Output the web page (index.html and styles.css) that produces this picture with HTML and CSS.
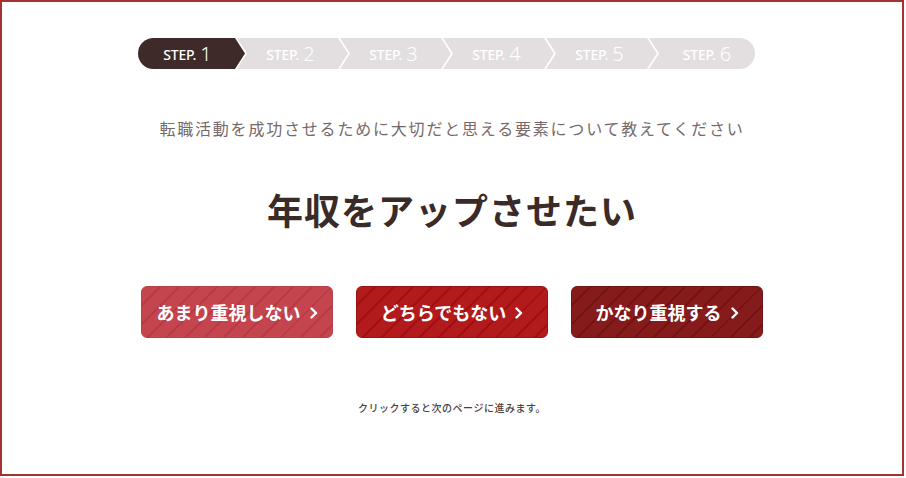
FILE: index.html
```html
<!DOCTYPE html>
<html lang="ja">
<head>
<meta charset="utf-8">
<title>STEP 1</title>
<link rel="stylesheet" href="styles.css">
</head>
<body>
<div class="frame">
  <ol class="steps">
    <li class="step step-first is-current"><span class="step-label">STEP.</span><span class="step-num">1</span></li>
    <li class="step"><span class="step-label">STEP.</span><span class="step-num">2</span></li>
    <li class="step"><span class="step-label">STEP.</span><span class="step-num">3</span></li>
    <li class="step"><span class="step-label">STEP.</span><span class="step-num">4</span></li>
    <li class="step"><span class="step-label">STEP.</span><span class="step-num">5</span></li>
    <li class="step step-last"><span class="step-label">STEP.</span><span class="step-num">6</span></li>
  </ol>

  <p class="lead">転職活動を成功させるために大切だと思える要素について教えてください</p>

  <h1 class="question">年収をアップさせたい</h1>

  <div class="choices">
    <button class="choice choice-low" type="button">あまり重視しない<svg class="chev" viewBox="0 0 8 12" width="8" height="12"><polyline points="1.5,1.5 6,6 1.5,10.5" fill="none" stroke="#fff" stroke-width="2.4" stroke-linecap="round" stroke-linejoin="round"/></svg></button>
    <button class="choice choice-mid" type="button">どちらでもない<svg class="chev" viewBox="0 0 8 12" width="8" height="12"><polyline points="1.5,1.5 6,6 1.5,10.5" fill="none" stroke="#fff" stroke-width="2.4" stroke-linecap="round" stroke-linejoin="round"/></svg></button>
    <button class="choice choice-high" type="button">かなり重視する<svg class="chev" viewBox="0 0 8 12" width="8" height="12"><polyline points="1.5,1.5 6,6 1.5,10.5" fill="none" stroke="#fff" stroke-width="2.4" stroke-linecap="round" stroke-linejoin="round"/></svg></button>
  </div>

  <p class="note">クリックすると次のページに進みます。</p>
</div>
</body>
</html>
```

FILE: styles.css
```css
* { box-sizing: border-box; }

html, body {
  margin: 0;
  padding: 0;
  background: #ffffff;
}

body {
  font-family: "Noto Sans CJK JP", "Noto Sans", sans-serif;
}

.frame {
  width: 904px;
  height: 476px;
  border: 2px solid #a5322e;
  display: flex;
  flex-direction: column;
  align-items: center;
}

/* step bar */
.steps {
  list-style: none;
  margin: 36px 0 0 136px;
  padding: 0;
  display: flex;
  align-self: flex-start;
  height: 31px;
}

.step {
  width: 111px;
  height: 31px;
  margin-left: -8px;
  padding: 0 14px 0 10px;
  background: #e3dedf;
  color: #ffffff;
  display: flex;
  align-items: center;
  justify-content: center;
  clip-path: polygon(0 0, calc(100% - 10px) 0, 100% 50%, calc(100% - 10px) 100%, 0 100%, 10px 50%);
}

.step-first {
  width: 107px;
  margin-left: 0;
  padding: 0 8px 0 0;
  border-radius: 16px 0 0 16px;
  clip-path: polygon(0 0, calc(100% - 10px) 0, 100% 50%, calc(100% - 10px) 100%, 0 100%);
}

.step-last {
  width: 106px;
  padding: 0 0 0 10px;
  border-radius: 0 16px 16px 0;
  clip-path: polygon(0 0, 100% 0, 100% 100%, 0 100%, 10px 50%);
}

.is-current {
  background: #3e2a28;
}

.step-label {
  font-family: "Noto Sans", sans-serif;
  font-size: 14px;
  font-weight: 500;
  letter-spacing: -0.2px;
  line-height: 1;
  margin-top: 2px;
}

.step-num {
  font-family: "Noto Sans", sans-serif;
  font-size: 20px;
  font-weight: 300;
  line-height: 1;
  margin-left: 4px;
}

/* texts */
.lead {
  margin: 47px 0 0;
  font-size: 16px;
  line-height: 24px;
  letter-spacing: 1.8px;
  color: #75696a;
}

.question {
  margin: 45px 0 0;
  font-size: 36px;
  line-height: 48px;
  font-weight: 700;
  letter-spacing: 1px;
  color: #3a2a28;
}

/* choices */
.choices {
  margin-top: 53px;
  display: flex;
  gap: 23px;
}

.choice {
  width: 192px;
  height: 52px;
  border-radius: 6px;
  font-family: "Noto Sans CJK JP", sans-serif;
  font-size: 18px;
  font-weight: 700;
  color: #ffffff;
  display: flex;
  align-items: center;
  justify-content: center;
  gap: 9px;
  padding: 0;
  cursor: pointer;
}

.choice-low {
  background: repeating-linear-gradient(135deg, #c5454f 0 11.5px, #b83a45 11.5px 13.5px);
  border: 1px solid #b4434a;
}

.choice-mid {
  background: repeating-linear-gradient(135deg, #b31a1c 0 11.5px, #a20f12 11.5px 13.5px);
  border: 1px solid #9b1215;
}

.choice-high {
  background: repeating-linear-gradient(135deg, #861b1c 0 11.5px, #751214 11.5px 13.5px);
  border: 1px solid #701517;
}

.chev {
  display: block;
  margin-top: 1px;
}

.note {
  margin: 62px 0 0;
  font-size: 10px;
  line-height: 16px;
  letter-spacing: 0.5px;
  font-weight: 500;
  color: #4a4040;
}
```
